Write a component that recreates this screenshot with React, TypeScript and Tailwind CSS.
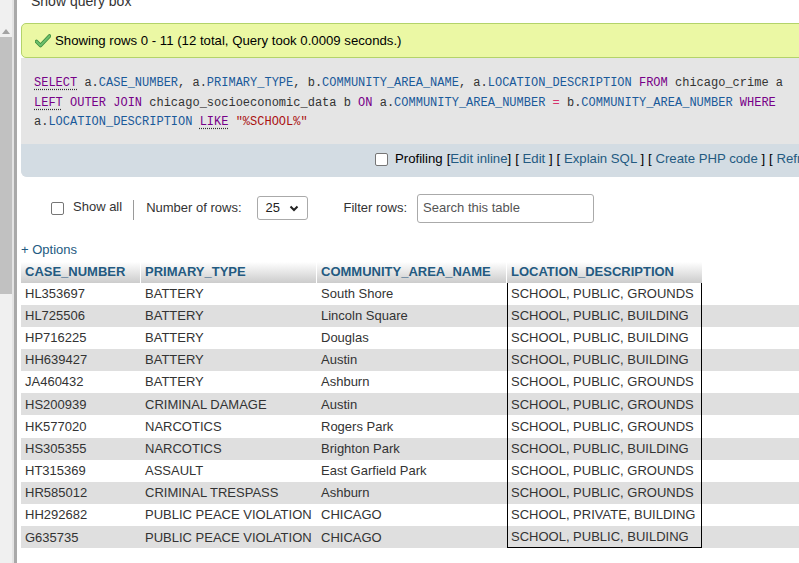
import React from "react";

const rows: [string, string, string, string][] = [
  ["HL353697", "BATTERY", "South Shore", "SCHOOL, PUBLIC, GROUNDS"],
  ["HL725506", "BATTERY", "Lincoln Square", "SCHOOL, PUBLIC, BUILDING"],
  ["HP716225", "BATTERY", "Douglas", "SCHOOL, PUBLIC, BUILDING"],
  ["HH639427", "BATTERY", "Austin", "SCHOOL, PUBLIC, BUILDING"],
  ["JA460432", "BATTERY", "Ashburn", "SCHOOL, PUBLIC, GROUNDS"],
  ["HS200939", "CRIMINAL DAMAGE", "Austin", "SCHOOL, PUBLIC, GROUNDS"],
  ["HK577020", "NARCOTICS", "Rogers Park", "SCHOOL, PUBLIC, GROUNDS"],
  ["HS305355", "NARCOTICS", "Brighton Park", "SCHOOL, PUBLIC, BUILDING"],
  ["HT315369", "ASSAULT", "East Garfield Park", "SCHOOL, PUBLIC, GROUNDS"],
  ["HR585012", "CRIMINAL TRESPASS", "Ashburn", "SCHOOL, PUBLIC, GROUNDS"],
  ["HH292682", "PUBLIC PEACE VIOLATION", "CHICAGO", "SCHOOL, PRIVATE, BUILDING"],
  ["G635735", "PUBLIC PEACE VIOLATION", "CHICAGO", "SCHOOL, PUBLIC, BUILDING"],
];

const Kw = ({ children, u }: { children: React.ReactNode; u?: boolean }) => (
  <span className={"text-[#770088] " + (u ? "underline decoration-dotted decoration-[#333] underline-offset-[3px]" : "")}>
    {children}
  </span>
);
const Col = ({ p, n }: { p: string; n: string }) => (
  <span>
    <span className="text-[#333]">{p}</span>
    <span className="text-[#1a5a9a]">{n}</span>
  </span>
);

function Checkbox() {
  return <span className="inline-block w-[13px] h-[13px] border border-[#767676] rounded-[2px] bg-white shrink-0" />;
}

export default function App() {
  const font = { fontFamily: '"Liberation Sans", Arial, sans-serif' };
  return (
    <div className="w-[799px] h-[563px] overflow-hidden bg-white flex" style={font}>
      {/* left scrollbar / frame edge */}
      <div className="w-[12px] h-full flex flex-col shrink-0 bg-[#f0f0f0]">
        <div className="h-[25px]" />
        <div className="h-[12px] flex items-center justify-center">
          <svg width="8" height="5" viewBox="0 0 8 5">
            <polygon points="4,0 8,5 0,5" fill="#a3a3a3" />
          </svg>
        </div>
        <div className="h-[257px] bg-[#c1c1c1]" />
        <div className="flex-1" />
      </div>
      <div className="w-[2px] h-full bg-[#e4e4e4] shrink-0" />
      <div className="w-[3px] h-full bg-[#a9a9a9] shrink-0" />

      <div className="pl-[4px] w-[900px] shrink-0">
        {/* Show query box */}
        <div className="h-[23px] overflow-hidden pl-[10px]">
          <div className="mt-[-7px] leading-[16px] text-[14px] text-[#333]">Show query box</div>
        </div>

        {/* success */}
        <div className="h-[35px] border border-[#b3d36a] rounded-l-[5px] bg-[#ebf8a4] flex items-center pl-[13px] text-[13.2px] text-black">
          <svg width="16" height="14" viewBox="0 0 16 14" className="mr-[4px]">
            <path d="M1.5 7.5 L5.5 11.5 L14.5 2" fill="none" stroke="#3d8b3d" strokeWidth="3.6" strokeLinecap="round" strokeLinejoin="round" />
            <path d="M1.5 7.5 L5.5 11.5 L14.5 2" fill="none" stroke="#6cc06c" strokeWidth="2" strokeLinecap="round" strokeLinejoin="round" />
          </svg>
          <span>Showing rows 0 - 11 (12 total, Query took 0.0009 seconds.)</span>
        </div>

        {/* sql box */}
        <div className="bg-[#e5e5e5] rounded-bl-[6px]">
          <div
            className="pt-[16px] pl-[13px] pb-[11px] text-[12px] leading-[19.5px] text-[#333] whitespace-pre"
            style={{ fontFamily: '"Liberation Mono", "DejaVu Sans Mono", monospace' }}
          >
            <div>
              <Kw u>SELECT</Kw> <Col p="a." n="CASE_NUMBER" />, <Col p="a." n="PRIMARY_TYPE" />, <Col p="b." n="COMMUNITY_AREA_NAME" />, <Col p="a." n="LOCATION_DESCRIPTION" /> <Kw>FROM</Kw> chicago_crime a
            </div>
            <div>
              <Kw u>LEFT</Kw> <Kw>OUTER</Kw> <Kw>JOIN</Kw> chicago_socioeconomic_data b <Kw>ON</Kw> <Col p="a." n="COMMUNITY_AREA_NUMBER" /> <span className="text-[#d6336c]">=</span> <Col p="b." n="COMMUNITY_AREA_NUMBER" /> <Kw>WHERE</Kw>
            </div>
            <div>
              <Col p="a." n="LOCATION_DESCRIPTION" /> <Kw u>LIKE</Kw> <span className="text-[#aa1111]">"%SCHOOL%"</span>
            </div>
          </div>
          <div className="h-[33px] bg-[#d3dce3] rounded-bl-[6px] flex items-center pl-[354px] pb-[2px] text-[13.2px] text-black whitespace-nowrap">
            <Checkbox />
            <span className="ml-[7px]">Profiling</span>
            <span className="ml-[4px]">[<span className="text-[#235a81]">Edit inline</span>]</span>
            <span className="ml-[4px]">[ <span className="text-[#235a81]">Edit</span> ]</span>
            <span className="ml-[4px]">[ <span className="text-[#235a81]">Explain SQL</span> ]</span>
            <span className="ml-[4px]">[ <span className="text-[#235a81]">Create PHP code</span> ]</span>
            <span className="ml-[4px]">[ <span className="text-[#235a81]">Refresh</span> ]</span>
          </div>
        </div>

        {/* navigation */}
        <div className="mt-[17px] h-[29px] flex items-center pl-[30px] text-[13px] text-[#333]">
          <Checkbox />
          <span className="ml-[9px] mt-[-3px]">Show all</span>
          <span className="ml-[11px] w-[1px] h-[20px] bg-[#9a9a9a] mt-[4px]" />
          <span className="ml-[12px]">Number of rows:</span>
          <div className="ml-[15px] w-[51px] h-[24px] border border-[#aaa] rounded-[3px] bg-white flex items-center justify-between pl-[8px] pr-[8px] text-[#222]">
            <span>25</span>
            <svg width="10" height="7" viewBox="0 0 10 7">
              <polyline points="1.5,1.5 5,5 8.5,1.5" fill="none" stroke="#222" strokeWidth="2" />
            </svg>
          </div>
          <span className="ml-[36px]">Filter rows:</span>
          <div className="ml-[10px] w-[177px] h-[29px] border border-[#aaa] rounded-[3px] bg-white flex items-center pl-[5px] text-[#555]">
            Search this table
          </div>
        </div>

        {/* options */}
        <div className="mt-[19px] leading-[16px] text-[13px] text-[#235a81]">+ Options</div>

        {/* table */}
        <div className="mt-[4px] text-[13px]">
          <div className="flex h-[21px] font-bold text-[#235a81]">
            {[
              ["CASE_NUMBER", "w-[120px]"],
              ["PRIMARY_TYPE", "w-[176px]"],
              ["COMMUNITY_AREA_NAME", "w-[190px]"],
              ["LOCATION_DESCRIPTION", "w-[195px]"],
            ].map(([t, w], i) => (
              <div
                key={i}
                className={`${w} h-full flex items-center pl-[4px] bg-gradient-to-b from-white to-[#cccccc] ${i < 3 ? "border-r border-white" : ""}`}
              >
                {t}
              </div>
            ))}
          </div>
          {rows.map((r, i) => (
            <div key={i} className={`flex h-[22.17px] text-[#333] ${i % 2 === 1 ? "bg-[#dfdfdf]" : "bg-white"}`}>
              <div className="w-[120px] flex items-center pl-[4px]">{r[0]}</div>
              <div className="w-[176px] flex items-center pl-[4px]">{r[1]}</div>
              <div className="w-[190px] flex items-center pl-[4px]">{r[2]}</div>
              <div
                className={`w-[195px] flex items-center pl-[3px] border-l border-r border-black whitespace-nowrap ${i === rows.length - 1 ? "border-b" : ""}`}
              >
                {r[3]}
              </div>
            </div>
          ))}
        </div>
      </div>
    </div>
  );
}
